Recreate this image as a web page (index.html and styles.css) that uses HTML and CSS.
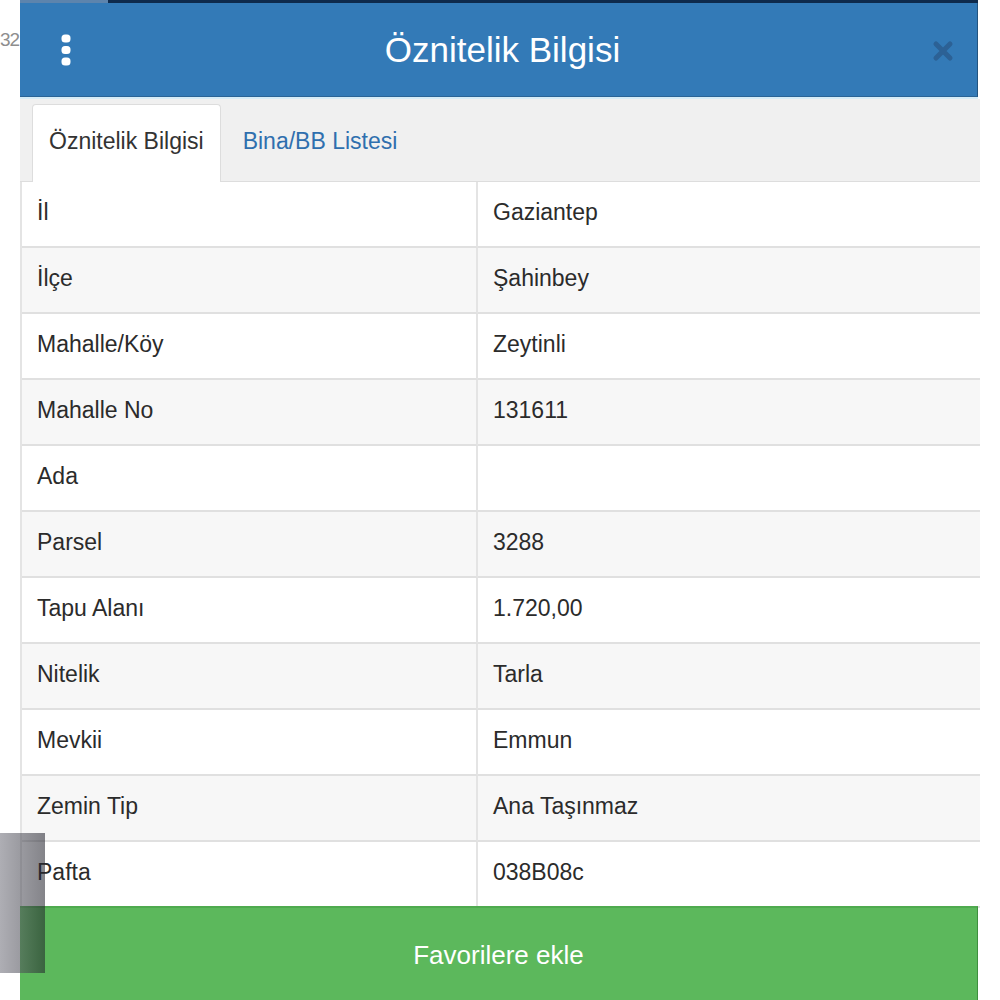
FILE: index.html
```html
<!DOCTYPE html>
<html lang="tr">
<head>
    <meta charset="UTF-8">
    <meta name="viewport" content="width=device-width, initial-scale=1.0">
    <title>Öznitelik Bilgisi</title>
    <link rel="stylesheet" href="styles.css">
</head>
<body>
    <div class="page">
        <!-- leftover from the map behind the dialog -->
        <span class="stray-num">32</span>

        <!-- Dialog -->
        <div class="panel">
            <div class="top-strip">
                <span class="strip-light"></span>
                <span class="strip-dark"></span>
            </div>

            <header class="panel-head">
                <button class="menu-btn" aria-label="Menü">
                    <svg width="12" height="32" viewBox="0 0 12 32">
                        <rect x="1.5" y="0.5" width="9" height="8" rx="3.5" fill="#ffffff"/>
                        <rect x="1.5" y="12" width="9" height="8" rx="3.5" fill="#ffffff"/>
                        <rect x="1.5" y="23.5" width="9" height="8" rx="3.5" fill="#ffffff"/>
                    </svg>
                </button>
                <h1>Öznitelik Bilgisi</h1>
                <button class="close-btn" aria-label="Kapat">
                    <svg width="22" height="22" viewBox="0 0 22 22">
                        <path d="M4 4 L18 18 M18 4 L4 18" stroke="#2c6195" stroke-width="5" stroke-linecap="round"/>
                    </svg>
                </button>
            </header>

            <!-- Tabs -->
            <ul class="tabs">
                <li class="tab active">Öznitelik Bilgisi</li>
                <li class="tab">Bina/BB Listesi</li>
            </ul>

            <!-- Attribute table -->
            <table class="attr-table">
                <tbody>
                    <tr><td>İl</td><td>Gaziantep</td></tr>
                    <tr><td>İlçe</td><td>Şahinbey</td></tr>
                    <tr><td>Mahalle/Köy</td><td>Zeytinli</td></tr>
                    <tr><td>Mahalle No</td><td>131611</td></tr>
                    <tr><td>Ada</td><td></td></tr>
                    <tr><td>Parsel</td><td>3288</td></tr>
                    <tr><td>Tapu Alanı</td><td>1.720,00</td></tr>
                    <tr><td>Nitelik</td><td>Tarla</td></tr>
                    <tr><td>Mevkii</td><td>Emmun</td></tr>
                    <tr><td>Zemin Tip</td><td>Ana Taşınmaz</td></tr>
                    <tr><td>Pafta</td><td>038B08c</td></tr>
                </tbody>
            </table>

            <button class="fav-btn">Favorilere ekle</button>
        </div>

        <!-- grey map control peeking over the dialog -->
        <div class="side-shade"></div>
    </div>
</body>
</html>
```

FILE: styles.css
```css
/* Global Styles */
body {
    margin: 0;
    padding: 0;
    background-color: #ffffff;
    font-family: 'Liberation Sans', Arial, sans-serif;
    color: #333333;
    overflow: hidden;
}

.page {
    position: relative;
    height: 1000px;
    padding-left: 20px;
}

.stray-num {
    position: absolute;
    left: 0;
    top: 29px;
    font-size: 19px;
    letter-spacing: -1px;
    color: #8e8e8e;
}

/* Panel */
.panel {
    width: 960px;
    display: flex;
    flex-direction: column;
}

.top-strip {
    display: flex;
    height: 3px;
    margin-right: 2px;
}

.strip-light {
    width: 88px;
    background-color: #5d84ad;
}

.strip-dark {
    flex-grow: 1;
    background-color: #0e2a4c;
}

/* Header */
.panel-head {
    display: flex;
    align-items: center;
    justify-content: space-between;
    height: 93px;
    margin-right: 2px;
    background-color: #337ab7;
    border-bottom: 1px solid #2a6496;
    border-right: 1px solid #23547f;
    box-shadow: 0 2px 0 #d6ecf7;
    margin-bottom: 2px;
}

.panel-head h1 {
    margin: 0;
    font-size: 35px;
    font-weight: normal;
    color: #ffffff;
    padding-right: 4px;
}

.menu-btn,
.close-btn {
    background: none;
    border: none;
    padding: 0;
    display: flex;
    align-items: center;
    justify-content: center;
    width: 40px;
    height: 40px;
    cursor: pointer;
}

.menu-btn {
    margin-left: 26px;
}

.close-btn {
    margin-right: 14px;
    margin-top: 3px;
}

/* Tabs */
.tabs {
    list-style: none;
    margin: 0;
    padding: 5px 0 0 12px;
    display: flex;
    align-items: flex-end;
    height: 77px;
    background-color: #f0f0f0;
    border-bottom: 1px solid #dddddd;
}

.tab {
    height: 77px;
    box-sizing: border-box;
    display: flex;
    align-items: center;
    padding: 0 16px 4px;
    margin-right: 5px;
    font-size: 23px;
    color: #2f6fae;
    border: 1px solid transparent;
    border-bottom: none;
    border-radius: 4px 4px 0 0;
}

.tab.active {
    background-color: #ffffff;
    color: #333333;
    border-color: #dddddd;
    margin-bottom: -1px;
    height: 78px;
}

/* Attribute table */
.attr-table {
    width: 100%;
    border-collapse: separate;
    border-spacing: 0;
    border-left: 2px solid #e4e4e4;
    font-size: 23px;
}

.attr-table td {
    padding: 17px 15px 21px;
    line-height: 26px;
    height: 26px;
    border-bottom: 2px solid #e0e0e0;
    color: #2b2b2b;
}

.attr-table td:first-child {
    width: 424px;
    border-right: 2px solid #e4e4e4;
}

.attr-table tr:nth-child(even) td {
    background-color: #f7f7f7;
}

/* Favourite button */
.fav-btn {
    height: 96px;
    margin-right: 2px;
    margin-top: -2px;
    background-color: #5cb85c;
    border: none;
    border-top: 2px solid #4faa4f;
    border-right: 1px solid #3f8f3f;
    color: #ffffff;
    font-family: 'Liberation Sans', Arial, sans-serif;
    font-size: 26px;
    cursor: pointer;
}

/* Grey block over the bottom left corner */
.side-shade {
    position: absolute;
    left: 0;
    top: 833px;
    width: 45px;
    height: 140px;
    background: linear-gradient(to right, rgba(120, 120, 130, 0.6), rgba(30, 30, 40, 0.55));
}
```
